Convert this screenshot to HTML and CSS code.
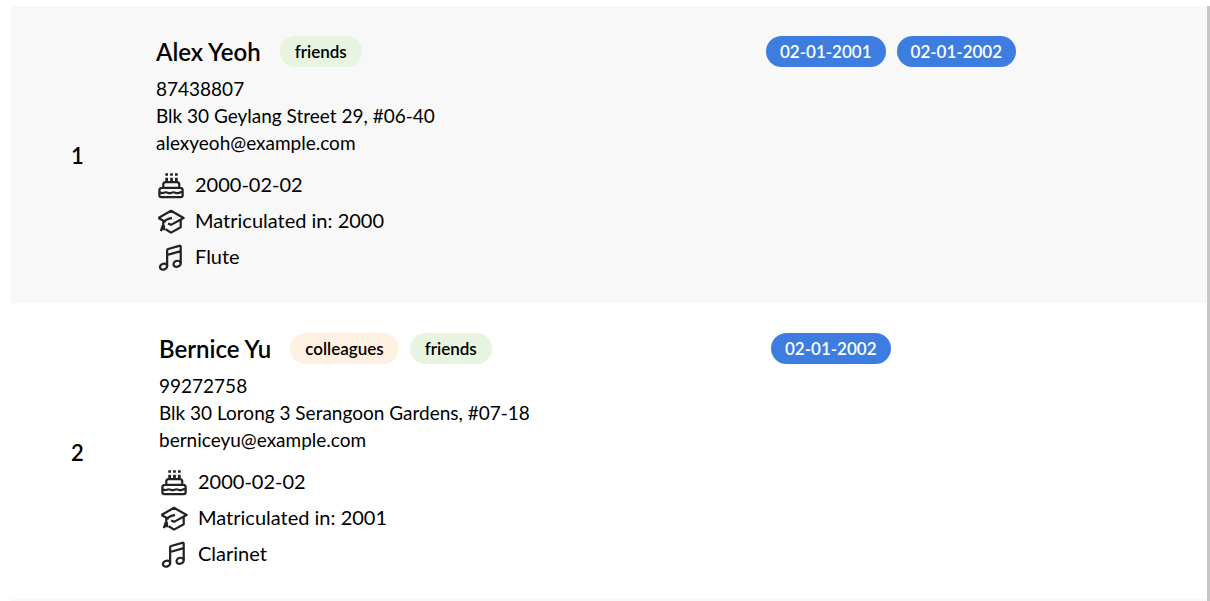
FILE: index.html
```html
<!DOCTYPE html>
<html lang="en">
<head>
<meta charset="utf-8">
<title>Members</title>
<link rel="stylesheet" href="styles.css">
</head>
<body>
<svg class="sprite" aria-hidden="true">
  <symbol id="cake" viewBox="0 0 32 32">
    <path d="M7.500 19.500v-3.500q0-2.500 2.500-2.500h11.500q2.500 0 2.500 2.500v3.500M6.500 19.500h18.500q2.500 0 2.500 2.500v5q0 2-2 2H5.500q-2 0-2-2v-5q0-2.500 3-2.500M3.500 23.500q2.500 2 4.500 1q2-1 4 0t4 0t4 0t4 0t3.500-1"/>
    <path stroke-width="2.800" d="M11 4.500v2.500M16 4.500v2.500M21 4.500v2.500M11 9v4M16 9v4M21 9v4"/>
  </symbol>
  <symbol id="cap" viewBox="0 0 32 32">
    <path d="M2.500 13.500L15.500 6L28.500 13.500L15.500 20.500L12.500 19M16.500 13.500Q12.500 13.500 7.500 17.500V26M2.500 13.500L10 17.500M7 21L5 27M8 21L8.500 26M10 25L15.500 28.500L25.500 23V15.500"/>
  </symbol>
  <symbol id="note" viewBox="0 0 32 32">
    <path d="M11.500 26V9.500Q11.500 8.500 12.500 8.200L24 5Q25.500 4.500 25.500 6V23M11.500 14.500L25.500 10.500"/>
    <ellipse cx="7.800" cy="26.500" rx="3.800" ry="3" transform="rotate(-20 7.800 26.500)"/><ellipse cx="21.800" cy="23.500" rx="3.800" ry="3" transform="rotate(-20 21.800 23.500)"/>
  </symbol>
</svg>
<div class="viewport">
  <ol class="people">
    <li class="person person-first">
      <span class="index">1</span>
      <section class="details">
        <header class="heading"><h2 class="name">Alex Yeoh</h2><span class="tag green">friends</span></header>
        <p class="line">87438807</p>
        <p class="line">Blk 30 Geylang Street 29, #06-40</p>
        <p class="line">alexyeoh@example.com</p>
        <ul class="facts">
          <li class="fact"><svg class="icon"><use href="#cake"/></svg>2000-02-02</li>
          <li class="fact"><svg class="icon"><use href="#cap"/></svg>Matriculated in: 2000</li>
          <li class="fact"><svg class="icon"><use href="#note"/></svg>Flute</li>
        </ul>
      </section>
      <div class="dates"><span class="date">02-01-2001</span><span class="date">02-01-2002</span></div>
    </li>
    <li class="person">
      <span class="index">2</span>
      <section class="details">
        <header class="heading"><h2 class="name">Bernice Yu</h2><span class="tag orange">colleagues</span><span class="tag green">friends</span></header>
        <p class="line">99272758</p>
        <p class="line">Blk 30 Lorong 3 Serangoon Gardens, #07-18</p>
        <p class="line">berniceyu@example.com</p>
        <ul class="facts">
          <li class="fact"><svg class="icon"><use href="#cake"/></svg>2000-02-02</li>
          <li class="fact"><svg class="icon"><use href="#cap"/></svg>Matriculated in: 2001</li>
          <li class="fact"><svg class="icon"><use href="#note"/></svg>Clarinet</li>
        </ul>
      </section>
      <div class="dates"><span class="date">02-01-2002</span></div>
    </li>
  </ol>
  <div class="scrollbar"></div>
</div>
</body>
</html>
```
FILE: styles.css
```css
* { box-sizing: border-box; }
body { margin: 0; height: 100vh; overflow: hidden; background: #fff; color: #000; font: 20px/27px Lato, "Open Sans", sans-serif; }
h2, p, ol, ul { margin: 0; padding: 0; list-style: none; }
.sprite { position: absolute; width: 0; height: 0; }
.viewport { display: flex; min-height: 100vh; padding: 6px 0 0 11px; }
.people { flex: 1; background: linear-gradient(#f8f8f8, #f8f8f8) bottom / 100% 2px no-repeat; }
.scrollbar { width: 3px; background: #c6c6c6; }
.person { display: grid; grid-template-columns: 88px 552fr 436fr; align-items: center; column-gap: 60px; padding: 30px 0 28px; }
.person-first { grid-template-columns: 85px 550fr 441fr; background: #f8f8f8; }
.index { padding-left: 60px; font-size: 22px; font-weight: 600; }
.heading { display: flex; align-items: center; height: 31px; margin-bottom: 8px; }
.name { margin-right: 19px; font-size: 24px; font-weight: 600; }
.tag, .date { padding: 2px 15px; border-radius: 16px; }
.tag { margin-right: 11px; font-size: 17px; font-weight: 600; }
.green { background: #e6f4e0; }
.orange { background: #fff1e2; }
.line { font-size: 19px; }
.facts { margin-top: 10px; padding-bottom: 1px; }
.fact { display: flex; align-items: center; gap: 8px; height: 36px; }
.icon { width: 31px; height: 31px; fill: none; stroke: #222; stroke-width: 2.3; stroke-linejoin: round; }
.dates { display: flex; flex-wrap: wrap; align-self: start; gap: 11px; }
.date { padding: 2px 14px; background: #3e7de0; color: #fff; font-size: 17px; font-weight: 600; }
```
